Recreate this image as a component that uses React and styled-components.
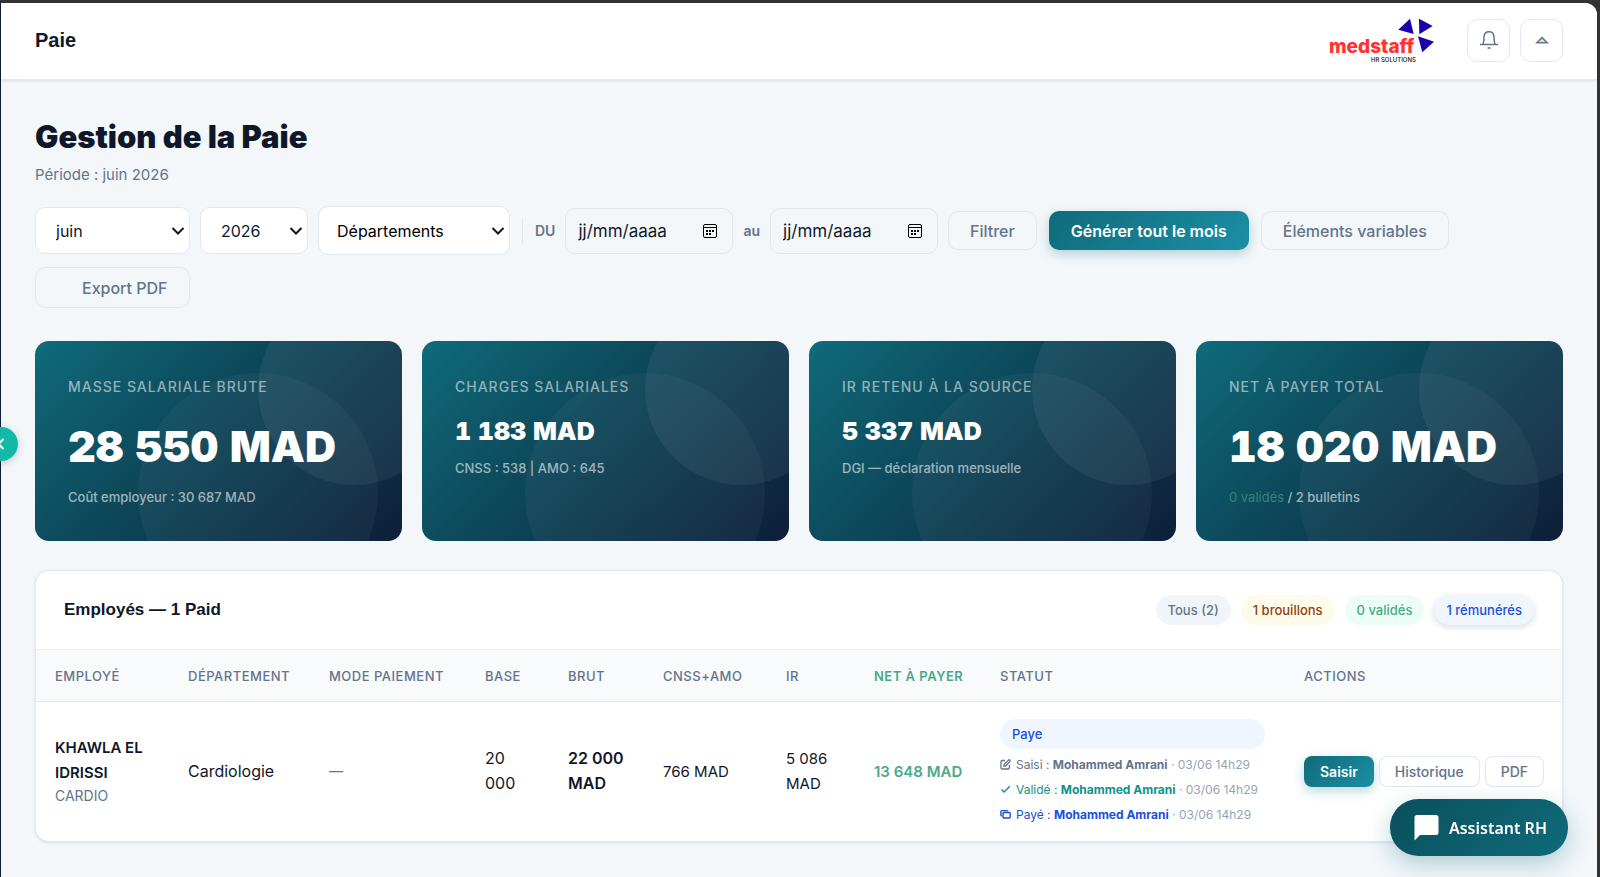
import React from 'react'
import styled, { createGlobalStyle } from 'styled-components'

const GlobalStyle = createGlobalStyle`
  :root {
    --bg: #f3f7fa;
    --ink: #0f172a;
    --muted: #64748b;
    --line: #e2e8f0;
    --teal: #0f6b7a;
    --green: #4aa98a;
    --blue: #1d4ed8;
    --font-body: Inter, 'Liberation Sans', sans-serif;
    --font-title: 'Liberation Sans', Arial, sans-serif;
    --font-display: Inter, 'Liberation Sans', sans-serif;
  }

  * {
    box-sizing: border-box;
  }

  body {
    margin: 0;
    background: #333333;
    color: var(--ink);
    font-family: var(--font-body);
    font-size: 15px;
    line-height: 24px;
  }

  button,
  input,
  select {
    font-family: inherit;
  }
`

const Page = styled.div`
  margin: 3px 3px 0 0;
  min-height: calc(100vh - 3px);
  border-left: 1px solid #0d1f3c;
  border-top-right-radius: 12px;
  background: var(--bg);
`

const TopBar = styled.header`
  display: flex;
  align-items: center;
  justify-content: space-between;
  height: 77px;
  padding: 0 34px 2px;
  background: #ffffff;
  border-bottom: 1px solid var(--line);
  border-top-right-radius: 12px;
  box-shadow: 0 1px 3px rgba(15, 23, 42, 0.1);
`

const TopTitle = styled.div`
  font-family: var(--font-title);
  font-size: 20px;
  font-weight: 700;
`

const TopActions = styled.div`
  display: flex;
  align-items: center;
  gap: 10px;
`

const LogoSvg = styled.svg`
  width: 106px;
  height: 46px;
  margin-right: 22px;
`

const IconButton = styled.button`
  display: flex;
  align-items: center;
  justify-content: center;
  width: 43px;
  height: 43px;
  padding: 0;
  border: 1px solid var(--line);
  border-radius: 10px;
  background: #ffffff;
  color: var(--muted);
  cursor: pointer;
`

const Content = styled.main`
  padding: 36px 34px;
`

const PageTitle = styled.h1`
  margin: 0;
  font-family: var(--font-display);
  font-size: 31px;
  font-weight: 900;
  line-height: 42px;
`

const Period = styled.p`
  margin: 5px 0 0;
  color: var(--muted);
  font-size: 15px;
  line-height: 24px;
`

const Filters = styled.form`
  display: flex;
  flex-wrap: wrap;
  align-items: center;
  gap: 12px;
  margin-top: 19px;
`

const FilterGroup = styled.div`
  display: flex;
  align-items: center;
  gap: 10px;
`

const SelectBox = styled.div`
  position: relative;
  width: ${(props) => props.$width}px;

  svg {
    position: absolute;
    top: 50%;
    right: 5px;
    transform: translateY(-50%);
    pointer-events: none;
  }
`

const SelectInput = styled.select`
  display: block;
  width: 100%;
  height: ${(props) => (props.$tall ? 49 : 47)}px;
  padding: 0 20px ${(props) => (props.$tall ? '0 18px' : '0 20px')};
  border: 1px solid var(--line);
  border-radius: 10px;
  background-color: #ffffff;
  color: ${(props) => (props.$tall ? '#000000' : 'var(--ink)')};
  font-size: 16px;
  appearance: none;
`

const Divider = styled.span`
  width: 1px;
  height: 26px;
  margin: 0 2px;
  background: var(--line);
`

const DateLabel = styled.label`
  color: var(--muted);
  font-size: 14px;
  font-weight: 600;
`

const DateBox = styled.div`
  display: flex;
  align-items: center;
  width: 168px;
  height: 46px;
  padding: 0 14px 0 12px;
  border: 1px solid var(--line);
  border-radius: 10px;
`

const DateInput = styled.input`
  flex: 1;
  min-width: 0;
  padding: 0;
  border: 0;
  outline: 0;
  background: transparent;
  font-size: 17px;

  &::placeholder {
    color: var(--ink);
    opacity: 1;
  }
`

const CalendarButton = styled.button`
  display: flex;
  padding: 0;
  border: 0;
  background: transparent;
  color: #000000;
`

const Button = styled.button`
  height: ${(props) => (props.$small ? 31 : 39)}px;
  padding: 0 ${(props) => (props.$small ? 16 : 22)}px;
  border: 0;
  border-radius: ${(props) => (props.$small ? 8 : 10)}px;
  background: ${(props) =>
    props.$primary ? 'linear-gradient(135deg, #0f6b7a, #1b8fa6)' : 'transparent'};
  box-shadow: ${(props) =>
    props.$primary ? '0 4px 12px rgba(15, 107, 122, 0.28)' : 'inset 0 0 0 1px var(--line)'};
  color: ${(props) => (props.$primary ? '#ffffff' : 'var(--muted)')};
  font-size: ${(props) => (props.$small ? 14 : 16)}px;
  font-weight: ${(props) => (props.$primary ? 600 : 500)};
  white-space: nowrap;
  cursor: pointer;
`

const ExportButton = styled(Button)`
  height: 41px;
  padding-left: 47px;
`

const Stats = styled.section`
  display: grid;
  grid-template-columns: repeat(4, 1fr);
  gap: 20px;
  margin-top: 33px;
`

const StatCard = styled.article`
  position: relative;
  overflow: hidden;
  min-height: 200px;
  padding: 34px 33px 32px;
  border-radius: 14px;
  background: linear-gradient(135deg, #0f6b7a 0%, #0d4a5c 40%, #0d1f38 100%);
  color: #ffffff;

  &::before,
  &::after {
    content: '';
    position: absolute;
    border-radius: 50%;
  }

  &::before {
    top: -48px;
    right: -48px;
    width: 192px;
    height: 192px;
    background: rgba(255, 255, 255, 0.06);
  }

  &::after {
    right: 24px;
    bottom: -72px;
    width: 240px;
    height: 240px;
    background: rgba(255, 255, 255, 0.04);
  }
`

const StatLabel = styled.div`
  color: rgba(255, 255, 255, 0.55);
  font-size: 14px;
  font-weight: 500;
  letter-spacing: 1px;
  line-height: 24px;
  text-transform: uppercase;
`

const StatValue = styled.div`
  margin-top: ${(props) => (props.$large ? 12 : 11)}px;
  font-family: var(--font-display);
  font-size: ${(props) => (props.$large ? 43 : 25)}px;
  font-variant-numeric: tabular-nums;
  font-weight: 900;
  line-height: ${(props) => (props.$large ? 70 : 42)}px;
  white-space: nowrap;
`

const StatNote = styled.div`
  margin-top: 5px;
  color: rgba(255, 255, 255, 0.6);
  font-size: 13px;
  font-weight: 500;
  line-height: 22px;

  span {
    color: #31857a;
    font-weight: 400;
  }
`

const TableCard = styled.section`
  overflow: hidden;
  margin-top: 29px;
  border: 1px solid var(--line);
  border-radius: 14px;
  background: #ffffff;
  box-shadow: 0 1px 3px rgba(15, 23, 42, 0.1);
`

const TableHead = styled.div`
  display: flex;
  align-items: center;
  justify-content: space-between;
  height: 78px;
  padding: 0 28px;
`

const TableTitle = styled.h2`
  margin: 0;
  font-family: var(--font-title);
  font-size: 17px;
  font-weight: 700;
`

const Pills = styled.div`
  display: flex;
  gap: 10px;
`

const Pill = styled.button`
  height: 30px;
  padding: 0 12px;
  border: 0;
  border-radius: 15px;
  background: ${(props) => props.$bg};
  box-shadow: ${(props) => (props.$active ? '0 2px 6px rgba(15, 23, 42, 0.15)' : 'none')};
  color: ${(props) => props.$color};
  font-size: 13px;
  font-weight: 500;
  cursor: pointer;
`

const Table = styled.table`
  width: 100%;
  border-collapse: collapse;
  table-layout: fixed;
`

const Th = styled.th`
  height: 52px;
  padding: 0 0 0 19px;
  border-top: 1px solid #eef2f7;
  border-bottom: 1px solid var(--line);
  background: #f8fafc;
  color: ${(props) => (props.$net ? 'var(--green)' : 'var(--muted)')};
  font-size: 13px;
  font-weight: ${(props) => (props.$net ? 600 : 500)};
  letter-spacing: 0.5px;
  text-align: left;
  text-transform: uppercase;
  white-space: nowrap;
`

const Td = styled.td`
  height: 139px;
  padding: 0 0 0 19px;
  color: ${(props) => (props.$net ? 'var(--green)' : 'inherit')};
  font-size: ${(props) => (props.$small ? 15 : 16)}px;
  font-weight: ${(props) => (props.$strong ? 600 : 400)};
  line-height: 25px;
`

const Lines = styled.div`
  max-width: ${(props) => props.$max}px;
`

const Code = styled.div`
  color: var(--muted);
  font-size: 14px;
  font-weight: 400;
  line-height: 22px;
`

const Status = styled.div`
  display: inline-flex;
  flex-direction: column;
  min-width: 265px;
  padding-top: 3px;
  vertical-align: middle;
`

const StatusBadge = styled.span`
  height: 30px;
  margin-bottom: 3px;
  padding: 0 12px;
  border-radius: 15px;
  background: #eff6ff;
  color: var(--blue);
  font-size: 13px;
  font-weight: 500;
  line-height: 30px;
`

const Step = styled.span`
  display: flex;
  align-items: center;
  height: 25px;
  color: ${(props) => props.$color};
  font-size: 12px;
  white-space: nowrap;

  svg {
    margin-right: 5px;
  }

  time {
    color: #94a3b8;
  }
`

const RowActions = styled.div`
  display: flex;
  gap: 5px;
`

const SidebarToggle = styled.button`
  position: fixed;
  top: calc(50% + 5px);
  left: -16px;
  display: flex;
  align-items: center;
  justify-content: center;
  width: 34px;
  height: 34px;
  padding: 0;
  border: 0;
  border-radius: 50%;
  background: #14b8a6;
  box-shadow: 0 2px 8px rgba(15, 23, 42, 0.2);
  color: #ffffff;
  transform: translateY(-50%);
  cursor: pointer;
`

const ChatButton = styled.button`
  position: fixed;
  right: 32px;
  bottom: 21px;
  display: flex;
  align-items: center;
  gap: 9px;
  height: 57px;
  padding: 0 21px 0 24px;
  border: 0;
  border-radius: 28px;
  background: linear-gradient(135deg, #0a4f5c, #0f6b7a);
  box-shadow: 0 8px 24px rgba(15, 107, 122, 0.3);
  color: #ffffff;
  font-family: 'Noto Sans', 'Open Sans', sans-serif;
  font-size: 16px;
  font-weight: 600;
  cursor: pointer;
`

const Logo = () => (
  <LogoSvg viewBox='0 0 106 46' role='img' aria-label='medstaff HR Solutions'>
    <g fill='#1800ad'>
      <path d='M69.3 12.7 81 1.7 84.7 17Z' />
      <path d='M90 1.7 103.7 9 90.3 17.3Z' />
      <path d='M89 19.3 105 24.7 93.3 35.3Z' />
    </g>
    <text x='0' y='36' fill='#ff3131' fontFamily='Inter' fontSize='19' fontWeight='800'>
      medstaff
    </text>
    <text x='42' y='45' fill='#111111' fontFamily='Inter' fontSize='6' fontWeight='500'>
      HR SOLUTIONS
    </text>
  </LogoSvg>
)

const BellIcon = () => (
  <svg width='20' height='20' viewBox='0 0 20 20' fill='none' stroke='currentColor' strokeWidth='1.5'>
    <path d='M1 14.5h18M3.5 14.3c.8-.6 1.1-1.5 1.2-2.8l.3-4.500C5.200 3.600 6.800 1.800 10 1.800s4.800 1.800 5 5.200l.3 4.500c.1 1.300.4 2.200 1.200 2.800M8.500 18h3' />
  </svg>
)

const CaretIcon = () => (
  <svg width='14' height='8' viewBox='0 0 14 8' fill='#dbe1e8' stroke='currentColor' strokeWidth='1.5'>
    <path d='M1.8 6.8 7 1.6l5.2 5.2Z' />
  </svg>
)

const CalendarIcon = () => (
  <svg width='16' height='16' viewBox='0 0 16 16' fill='none' stroke='currentColor'>
    <rect x='1.5' y='1.5' width='13' height='13' rx='1.5' />
    <path d='M1 4.5h14' />
    <path d='M4 8h8M4 11h5' strokeWidth='2' strokeDasharray='2 1' />
  </svg>
)

const SelectArrow = () => (
  <svg width='14' height='9' viewBox='0 0 14 9' fill='none' stroke='currentColor' strokeWidth='2'>
    <path d='M1.5 1.5 7 7l5.5-5.5' />
  </svg>
)

const EditIcon = () => (
  <svg width='11' height='11' viewBox='0 0 11 11' fill='none' stroke='currentColor' strokeWidth='1.3'>
    <path d='M5 1.5H2.2a1.2 1.2 0 0 0-1.2 1.2v6A1.2 1.2 0 0 0 2.2 10h6a1.2 1.2 0 0 0 1.2-1.2V6' />
    <path d='M4 7.2 4.3 5.3 8.6 1a1 1 0 0 1 1.4 1.4L5.8 6.8Z' />
  </svg>
)

const CheckIcon = () => (
  <svg width='11' height='11' viewBox='0 0 11 11' fill='none' stroke='currentColor' strokeWidth='1.4'>
    <path d='m1.5 5.5 2.6 2.6 5.7-5.9' />
  </svg>
)

const CopyIcon = () => (
  <svg width='11' height='11' viewBox='0 0 11 11' fill='none' stroke='currentColor' strokeWidth='1.4'>
    <rect x='3' y='3.5' width='7.2' height='5.5' rx='1' />
    <path d='M1.8 7A1 1 0 0 1 .9 6V2.6a1 1 0 0 1 1-1h5a1 1 0 0 1 1 .9' />
  </svg>
)

const ChevronIcon = () => (
  <svg width='12' height='14' viewBox='0 0 12 14' fill='none' stroke='currentColor' strokeWidth='2'>
    <path d='M8.5 2 3.5 7l5 5' />
  </svg>
)

const ChatIcon = () => (
  <svg width='26' height='26' viewBox='0 0 26 26' fill='currentColor'>
    <path d='M3 0h19a2.5 2.5 0 0 1 2.5 2.5v15a2.5 2.5 0 0 1-2.5 2.5H6L.5 25.500v-23A2.5 2.5 0 0 1 3 0Z' />
  </svg>
)

const stats = [
  {
    label: 'Masse salariale brute',
    value: '28 550 MAD',
    note: 'Coût employeur : 30 687 MAD',
    large: true,
  },
  { label: 'Charges salariales', value: '1 183 MAD', note: 'CNSS : 538 | AMO : 645' },
  { label: 'IR retenu à la source', value: '5 337 MAD', note: 'DGI — déclaration mensuelle' },
  {
    label: 'Net à payer total',
    value: '18 020 MAD',
    note: (
      <>
        <span>0 validés</span> / 2 bulletins
      </>
    ),
    large: true,
  },
]

const pills = [
  { label: 'Tous (2)', bg: '#f1f5f9', color: '#64748b' },
  { label: '1 brouillons', bg: '#fffbeb', color: '#92400e' },
  { label: '0 validés', bg: '#ecfdf5', color: '#4aa98a' },
  { label: '1 rémunérés', bg: '#eff6ff', color: '#1d4ed8', active: true },
]

const columns = [
  { label: 'Employé', width: 133 },
  { label: 'Département', width: 141 },
  { label: 'Mode paiement', width: 156 },
  { label: 'Base', width: 83 },
  { label: 'Brut', width: 95 },
  { label: 'CNSS+AMO', width: 123 },
  { label: 'IR', width: 88 },
  { label: 'Net à payer', width: 126, net: true },
  { label: 'Statut', width: 304 },
  { label: 'Actions', width: 277 },
]

const steps = [
  { icon: <EditIcon />, label: 'Saisi', color: '#64748b' },
  { icon: <CheckIcon />, label: 'Validé', color: '#0d9488' },
  { icon: <CopyIcon />, label: 'Payé', color: '#1d4ed8' },
]

const Select = ({ label, value, width, tall }) => (
  <SelectBox $width={width}>
    <SelectInput $tall={tall} aria-label={label}>
      <option>{value}</option>
    </SelectInput>
    <SelectArrow />
  </SelectBox>
)

const DateField = ({ id, label }) => (
  <>
    <DateLabel htmlFor={id}>{label}</DateLabel>
    <DateBox>
      <DateInput id={id} type='text' placeholder='jj/mm/aaaa' />
      <CalendarButton type='button' aria-label='Ouvrir le calendrier'>
        <CalendarIcon />
      </CalendarButton>
    </DateBox>
  </>
)

const App = () => {
  return (
    <>
      <GlobalStyle />
      <Page>
        <TopBar>
          <TopTitle>Paie</TopTitle>
          <TopActions>
            <Logo />
            <IconButton aria-label='Notifications'>
              <BellIcon />
            </IconButton>
            <IconButton aria-label='Réduire'>
              <CaretIcon />
            </IconButton>
          </TopActions>
        </TopBar>

        <Content>
          <PageTitle>Gestion de la Paie</PageTitle>
          <Period>Période : juin 2026</Period>

          <Filters onSubmit={(e) => e.preventDefault()}>
            <FilterGroup>
              <Select label='Mois' value='juin' width={155} />
              <Select label='Année' value='2026' width={108} />
              <Select label='Département' value='Départements' width={192} tall />
              <Divider />
              <DateField id='date-from' label='DU' />
              <DateField id='date-to' label='au' />
              <Button>Filtrer</Button>
            </FilterGroup>
            <Button type='button' $primary>
              Générer tout le mois
            </Button>
            <Button type='button'>Éléments variables</Button>
            <ExportButton type='button'>Export PDF</ExportButton>
          </Filters>

          <Stats>
            {stats.map((stat) => (
              <StatCard key={stat.label}>
                <StatLabel>{stat.label}</StatLabel>
                <StatValue $large={stat.large}>{stat.value}</StatValue>
                <StatNote>{stat.note}</StatNote>
              </StatCard>
            ))}
          </Stats>

          <TableCard>
            <TableHead>
              <TableTitle>Employés — 1 Paid</TableTitle>
              <Pills>
                {pills.map((pill) => (
                  <Pill key={pill.label} $bg={pill.bg} $color={pill.color} $active={pill.active}>
                    {pill.label}
                  </Pill>
                ))}
              </Pills>
            </TableHead>
            <Table>
              <colgroup>
                {columns.map((col) => (
                  <col key={col.label} width={col.width} />
                ))}
              </colgroup>
              <thead>
                <tr>
                  {columns.map((col) => (
                    <Th key={col.label} $net={col.net}>
                      {col.label}
                    </Th>
                  ))}
                </tr>
              </thead>
              <tbody>
                <tr>
                  <Td $small $strong>
                    <Lines $max={96}>KHAWLA EL IDRISSI</Lines>
                    <Code>CARDIO</Code>
                  </Td>
                  <Td>Cardiologie</Td>
                  <Td>
                    <Code>—</Code>
                  </Td>
                  <Td>
                    <Lines $max={45}>20 000</Lines>
                  </Td>
                  <Td $strong>
                    <Lines $max={70}>22 000 MAD</Lines>
                  </Td>
                  <Td $small>766 MAD</Td>
                  <Td $small>
                    <Lines $max={60}>5 086 MAD</Lines>
                  </Td>
                  <Td $small $strong $net>
                    13 648 MAD
                  </Td>
                  <Td>
                    <Status>
                      <StatusBadge>Paye</StatusBadge>
                      {steps.map((step) => (
                        <Step key={step.label} $color={step.color}>
                          {step.icon}
                          <span>
                            {step.label} : <b>Mohammed Amrani</b> <time>· 03/06 14h29</time>
                          </span>
                        </Step>
                      ))}
                    </Status>
                  </Td>
                  <Td>
                    <RowActions>
                      <Button $small $primary>
                        Saisir
                      </Button>
                      <Button $small>Historique</Button>
                      <Button $small>PDF</Button>
                    </RowActions>
                  </Td>
                </tr>
              </tbody>
            </Table>
          </TableCard>
        </Content>
      </Page>

      <SidebarToggle aria-label='Ouvrir le menu'>
        <ChevronIcon />
      </SidebarToggle>
      <ChatButton>
        <ChatIcon />
        Assistant RH
      </ChatButton>
    </>
  )
}

export default App
